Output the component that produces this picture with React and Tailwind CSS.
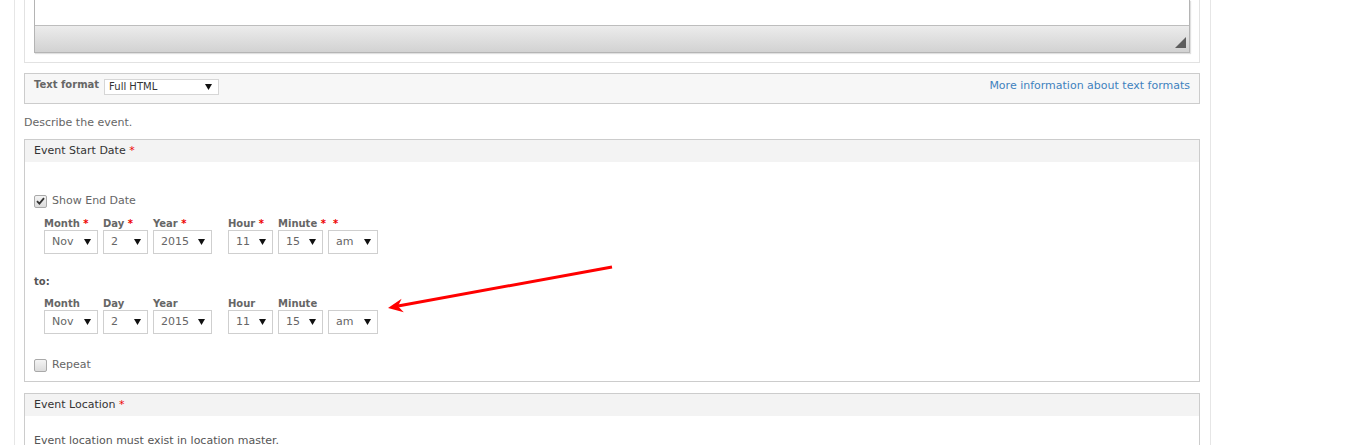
import React from "react";

function Arrow() {
  return (
    <svg width="7" height="6" viewBox="0 0 7 6" className="absolute right-[6px] top-1/2 -translate-y-1/2">
      <polygon points="0,0 7,0 3.5,6" fill="#111" />
    </svg>
  );
}

function Select({ value }) {
  return (
    <div className="relative h-[24px] w-full border border-[#cfcfcf] bg-white pl-[7px] text-[11px] leading-[22px] text-[#666]">
      {value}
      <Arrow />
    </div>
  );
}

function Col({ label, req, value, w, ml }) {
  return (
    <div className={`flex flex-col ${w} ${ml}`}>
      <div className="h-[13px] whitespace-nowrap text-[10px] font-bold leading-[13px] text-[#666]">
        {label}
        {req && <span className="text-[#e00]"> *</span>}
      </div>
      <Select value={value} />
    </div>
  );
}

function DateRow({ req }) {
  return (
    <div className="flex">
      <Col label="Month" req={req} value="Nov" w="w-[54px]" ml="ml-0" />
      <Col label="Day" req={req} value="2" w="w-[45px]" ml="ml-[5px]" />
      <Col label="Year" req={req} value="2015" w="w-[59px]" ml="ml-[5px]" />
      <Col label="Hour" req={req} value="11" w="w-[45px]" ml="ml-[16px]" />
      <Col label="Minute" req={req} value="15" w="w-[45px]" ml="ml-[5px]" />
      <div className="ml-[5px] flex w-[50px] flex-col">
        <div className="h-[13px] whitespace-nowrap pl-[5px] text-[10px] font-bold leading-[13px] text-[#e00]">
          {req ? "*" : ""}
        </div>
        <Select value="am" />
      </div>
    </div>
  );
}

function Checkbox({ checked }) {
  return (
    <div className="flex h-[13px] w-[13px] items-center justify-center rounded-[2px] border border-[#a9a9a9] bg-gradient-to-b from-[#f4f4f4] to-[#dcdcdc]">
      {checked && (
        <svg width="9" height="8" viewBox="0 0 9 8">
          <path d="M1 4.2 L3.4 6.6 L8 1.2" stroke="#333" strokeWidth="1.8" fill="none" />
        </svg>
      )}
    </div>
  );
}

export default function App() {
  return (
    <div className="relative h-[445px] w-[1370px] overflow-hidden bg-white font-['DejaVu_Sans',sans-serif]">
      <div className="ml-[14px] h-[445px] w-[1197px] border-x border-[#e6e6e6] bg-white pl-[9px] pr-[10px]">
        {/* textarea wrapper */}
        <div className="border-x border-b border-[#e2e2e2] px-[9px] pb-[9px]">
          <div className="border-x border-b border-[#b4b4b4] shadow-[1px_1px_1px_rgba(0,0,0,0.12)]">
            <div className="h-[26px] border-b border-[#bdbdbd] bg-white" />
            <div className="relative h-[26px] bg-gradient-to-b from-[#ececec] to-[#d2d2d2]">
              <svg width="11" height="11" viewBox="0 0 11 11" className="absolute right-[3px] bottom-[4px]">
                <polygon points="11,0 11,11 0,11" fill="#5e5e5e" />
              </svg>
            </div>
          </div>
        </div>

        {/* text format */}
        <div className="mt-[10px] flex h-[31px] items-start justify-between border border-[#cccccc] bg-[#f7f7f7] px-[9px] pt-[5px]">
          <div className="flex items-start">
            <span className="text-[10px] font-bold leading-[12px] text-[#666]">Text format</span>
            <div className="relative ml-[5px] h-[16px] w-[115px] border border-[#d6d6d6] bg-white pl-[4px] text-[10px] leading-[14px] text-[#333]">
              Full HTML
              <Arrow />
            </div>
          </div>
          <span className="text-[11px] leading-[14px] text-[#3f82be]">More information about text formats</span>
        </div>

        <div className="mt-[12px] text-[11px] leading-[14px] text-[#666]">Describe the event.</div>

        {/* event start date */}
        <div className="mt-[9px] border border-[#cccccc]">
          <div className="flex h-[22px] items-center bg-[#f3f3f3] px-[9px] text-[11px] text-[#333]">
            Event Start Date<span className="text-[#e00]">&nbsp;*</span>
          </div>
          <div className="pb-[9px] pl-[9px]">
            <div className="mt-[32px] flex h-[14px] items-center">
              <Checkbox checked />
              <span className="ml-[5px] text-[11px] leading-[14px] text-[#666]">Show End Date</span>
            </div>
            <div className="mt-[9px] pl-[10px]">
              <DateRow req />
            </div>
            <div className="mt-[21px] text-[10px] font-bold leading-[14px] text-[#555]">to:</div>
            <div className="mt-[8px] pl-[10px]">
              <DateRow req={false} />
            </div>
            <div className="mt-[24px] flex h-[14px] items-center">
              <Checkbox />
              <span className="ml-[5px] text-[11px] leading-[14px] text-[#666]">Repeat</span>
            </div>
          </div>
        </div>

        {/* event location */}
        <div className="mt-[11px] border border-[#cccccc]">
          <div className="flex h-[22px] items-center bg-[#f3f3f3] px-[9px] text-[11px] text-[#333]">
            Event Location<span className="text-[#e00]">&nbsp;*</span>
          </div>
          <div className="pl-[9px] pt-[18px] text-[11px] leading-[14px] text-[#555]">
            Event location must exist in location master.
          </div>
        </div>
      </div>

      {/* red annotation arrow */}
      <svg width="1370" height="445" className="pointer-events-none absolute left-0 top-0">
        <line x1="612" y1="267" x2="398" y2="306" stroke="#f00" strokeWidth="3" />
        <polygon points="388,308 403.8,312.2 398,306.2 401.6,298.8" fill="#f00" />
      </svg>
    </div>
  );
}
